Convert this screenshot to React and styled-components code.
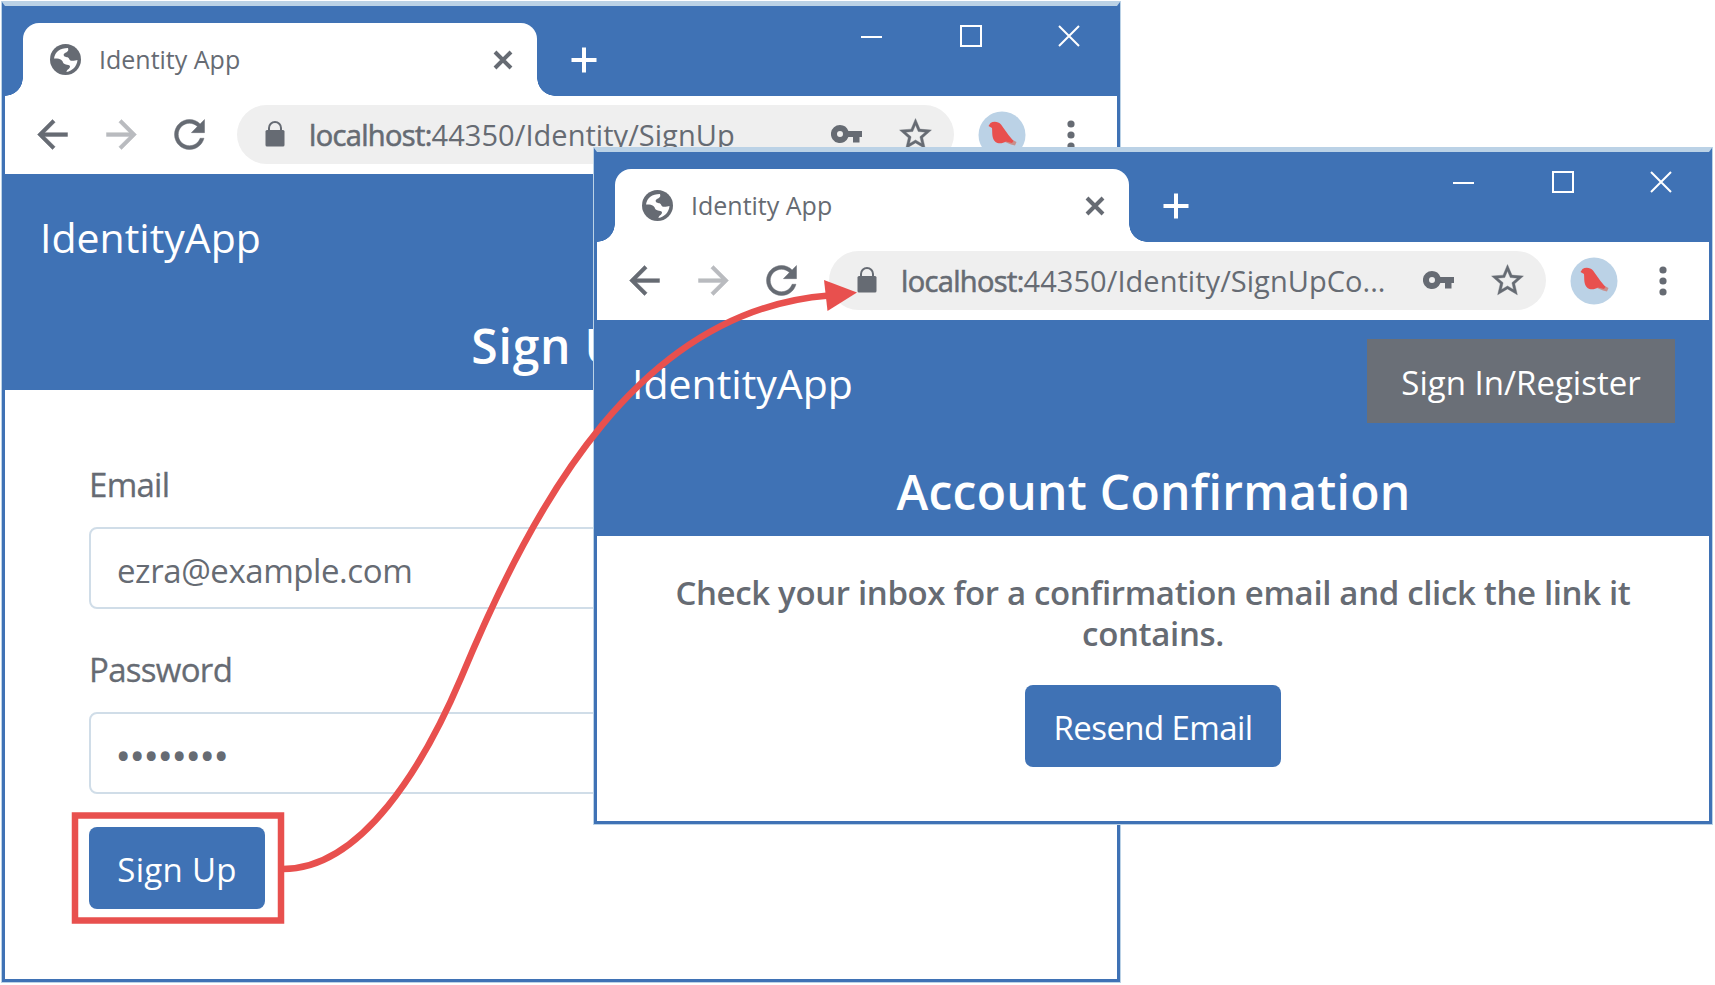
import React from "react";
import styled, { createGlobalStyle } from "styled-components";

const BLUE = "#3f72b5";
const GRAY = "#666b73";
const RED = "#e8504e";
const SKY = "#bbd2e6";

const GlobalStyle = createGlobalStyle`
  * { box-sizing: border-box; }
  body {
    margin: 0;
    background: #fff;
    color: ${GRAY};
    font-family: "Open Sans", "Noto Sans", sans-serif;
  }
`;

const Desktop = styled.main`
  position: relative;
  width: 1715px;
  height: 985px;
  overflow: hidden;
`;

const Window = styled.section`
  position: absolute;
  left: ${(p) => p.$x}px;
  top: ${(p) => p.$y}px;
  width: 1118px;
  height: ${(p) => p.$height}px;
  display: flex;
  flex-direction: column;
  background: #fff;
  border: 3px solid ${BLUE};
  border-top: 4px solid ${SKY};
  box-shadow: 0 0 0 1px ${SKY};
`;

const TitleBar = styled.header`
  display: flex;
  align-items: flex-end;
  height: 90px;
  flex: none;
  background: ${BLUE};
`;

const Tab = styled.div`
  position: relative;
  display: flex;
  align-items: center;
  width: 514px;
  height: 73px;
  margin-left: 18px;
  padding: 0 24px 0 27px;
  background: #fff;
  border-radius: 16px 16px 0 0;
  &::before,
  &::after {
    content: "";
    position: absolute;
    bottom: 0;
    width: 18px;
    height: 18px;
  }
  &::before {
    right: 100%;
    background: radial-gradient(circle at 0 0, ${BLUE} 17.5px, #fff 18px);
  }
  &::after {
    left: 100%;
    background: radial-gradient(circle at 100% 0, ${BLUE} 17.5px, #fff 18px);
  }
`;

const TabTitle = styled.span`
  flex: 1;
  margin-left: 18px;
  padding-bottom: 2px;
  font-size: 25px;
  line-height: 34px;
`;

const NewTab = styled.div`
  display: flex;
  align-items: center;
  height: 73px;
  margin-left: 34px;
`;

const Controls = styled.div`
  display: flex;
  gap: 76.5px;
  margin: 0 37px 49px auto;
`;

const Toolbar = styled.div`
  display: flex;
  align-items: center;
  flex: none;
  height: 78px;
  padding: 0 0 1px 25px;
`;

const NavButtons = styled.div`
  display: flex;
  gap: 23.5px;
  margin-right: 25px;
`;

const AddressBar = styled.div`
  display: flex;
  align-items: center;
  width: 717px;
  height: 59px;
  padding: 0 21px 0 28px;
  background: #efefef;
  border-radius: 30px;
`;

const Url = styled.span`
  flex: 1;
  margin-left: 24px;
  font-size: 29px;
  line-height: 40px;
  letter-spacing: 0.04px;
  white-space: nowrap;
`;

const Host = styled.span`
  letter-spacing: -0.65px;
  -webkit-text-stroke: 0.6px ${GRAY};
`;

const AddressIcons = styled.div`
  display: flex;
  align-items: center;
  gap: 36px;
  padding-bottom: 1px;
`;

const Avatar = styled.svg`
  margin-left: 24px;
`;

const Menu = styled.svg`
  margin-left: 41px;
`;

const Banner = styled.div`
  flex: none;
  height: 216px;
  padding: 19px 34px 0 35px;
  background: ${BLUE};
  color: #fff;
`;

const BannerRow = styled.div`
  display: flex;
  align-items: center;
  justify-content: space-between;
  height: 84px;
`;

const Brand = styled.div`
  padding-top: 4px;
  font-size: 41px;
  line-height: 56px;
`;

const AccountButton = styled.div`
  width: 308px;
  height: 84px;
  background: #6a6f77;
  font-size: 33px;
  line-height: 87px;
  text-align: center;
`;

const Title = styled.h1`
  margin: 36px 0 0;
  font-size: 48px;
  font-weight: 600;
  line-height: 66px;
  letter-spacing: ${(p) => p.$spacing}px;
  text-align: center;
`;

const Form = styled.div`
  display: flex;
  flex-direction: column;
  align-items: flex-start;
  padding: 73px 84px 0;
`;

const Label = styled.div`
  margin-bottom: 20px;
  font-size: 33px;
  line-height: 44px;
  letter-spacing: -0.7px;
  -webkit-text-stroke: 0.3px ${GRAY};
`;

const Field = styled.div`
  width: 100%;
  height: 82px;
  margin-bottom: ${(p) => p.$gap}px;
  padding-left: 26px;
  border: 2px solid #d0dde8;
  border-radius: 8px;
  font-size: 33px;
  line-height: 83px;
  letter-spacing: -0.42px;
`;

const Mask = styled.span`
  letter-spacing: 1.6px;
  -webkit-text-stroke: 2px ${GRAY};
`;

const Button = styled.div`
  width: ${(p) => p.$width}px;
  height: 82px;
  border-radius: 8px;
  background: ${BLUE};
  color: #fff;
  font-size: 33px;
  line-height: 85px;
  letter-spacing: ${(p) => p.$spacing}px;
  text-align: center;
`;

const Notice = styled.div`
  display: flex;
  flex-direction: column;
  align-items: center;
  padding: 36px 60px 0;
`;

const Message = styled.p`
  margin: 0 0 31px;
  font-size: 33px;
  font-weight: 600;
  line-height: 41px;
  letter-spacing: -0.35px;
  text-align: center;
`;

const Annotations = styled.svg`
  position: absolute;
  inset: 0;
`;

const Globe = () => (
  <svg width="31" height="31" viewBox="0 0 31 31">
    <circle cx="15.5" cy="15.5" r="15.5" fill={GRAY} />
    <path
      d="M4 14.500C5 8 10 4 18 4c.500 2 .500 3-1.500 4.200C14 9.500 13 10 14 12c1.500 1.500 4.500.500 5.200 3 .800 3 5.800 1.500 8.300 1C27 22 22.500 27 16.500 28c0-2.500 3.500-3 3.500-5.500 0-2.500-5.500-1-7-4-1-3.500-4-4-9-4z"
      fill="#fff"
    />
  </svg>
);

const Stroke = ({ size, d, width, color = "#fff" }) => (
  <svg width={size} height={size} viewBox={`0 0 ${size} ${size}`} fill="none">
    <path d={d} stroke={color} strokeWidth={width} />
  </svg>
);

const Glyph = ({ size = 45, d, color = GRAY, box = "0 0 24 24" }) => (
  <svg width={size} height={size} viewBox={box}>
    <path d={d} fill={color} stroke={color} strokeWidth="0.25" />
  </svg>
);

const Lock = () => (
  <svg width="20" height="28" viewBox="0 0 20 28">
    <rect x="0.500" y="9" width="19" height="16.500" rx="1.500" fill={GRAY} />
    <path d="M4 10V7a6 6 0 0 1 12 0V10" fill="none" stroke={GRAY} strokeWidth="2" />
  </svg>
);

const Key = () => (
  <svg width="31" height="20" viewBox="0 0 31 20">
    <path
      fillRule="evenodd"
      d="M9 1a9 9 0 0 1 8.400 6H31v6h-2.500v5.500h-6.500V13h-4.600A9 9 0 1 1 9 1zm0 6a3 3 0 1 0 0 6 3 3 0 0 0 0-6z"
      fill={GRAY}
    />
  </svg>
);

function BrowserWindow({ x, y, height, path, title, titleSpacing, action, children }) {
  return (
    <Window $x={x} $y={y} $height={height}>
      <TitleBar>
        <Tab>
          <Globe />
          <TabTitle>Identity App</TabTitle>
          <Stroke size={20} d="M2 2L18 18M18 2L2 18" width={4} color={GRAY} />
        </Tab>
        <NewTab>
          <Stroke size={26} d="M13 0.500V25.500M0.500 13H25.500" width={4} />
        </NewTab>
        <Controls>
          <Stroke size={22} d="M0 12H21" width={2} />
          <Stroke size={22} d="M1 1H21V21H1Z" width={2} />
          <Stroke size={22} d="M1 1L21 21M21 1L1 21" width={2} />
        </Controls>
      </TitleBar>
      <Toolbar>
        <NavButtons>
          <Glyph d="M20 11H7.830l5.590-5.590L12 4l-8 8 8 8 1.410-1.410L7.830 13H20v-2z" />
          <Glyph color="#b9bbbf" d="M12 4l-1.410 1.410L16.170 11H4v2h12.170l-5.580 5.590L12 20l8-8z" />
          <Glyph d="M17.650 6.350C16.200 4.900 14.210 4 12 4c-4.420 0-7.990 3.580-7.990 8s3.570 8 7.990 8c3.730 0 6.840-2.550 7.730-6h-2.080c-.820 2.330-3.040 4-5.650 4-3.310 0-6-2.690-6-6s2.690-6 6-6c1.660 0 3.140.690 4.220 1.780L13 11h7V4l-2.350 2.350z" />
        </NavButtons>
        <AddressBar>
          <Lock />
          <Url>
            <Host>localhost:</Host>
            {path}
          </Url>
          <AddressIcons>
            <Key />
            <Glyph
              size={35}
              box="1 1 22 22"
              d="M22 9.240l-7.190-.620L12 2 9.190 8.630 2 9.240l5.460 4.730L5.820 21 12 17.270 18.180 21l-1.630-7.030L22 9.240zM12 15.400l-3.760 2.270 1-4.280-3.320-2.880 4.380-.380L12 6.100l1.710 4.040 4.380.380-3.320 2.880 1 4.280L12 15.400z"
            />
          </AddressIcons>
        </AddressBar>
        <Avatar width="48" height="48" viewBox="0 0 48 48">
          <circle cx="24" cy="24" r="23.500" fill={SKY} />
          <path d="M29 26l9.500 5-1.500 3.500-4-1-6-2.500z" fill="#c98f8c" />
          <path d="M10.500 15l2-3c3-2 8-1.500 10.500 1.500l7.500 10.500 5 6-1.500 2-6-1.500c-3 2-8 2.500-10.500.5-4-3.500-3-9-3.500-14z" fill={RED} />
        </Avatar>
        <Menu width="8" height="30" viewBox="0 0 8 30">
          <circle cx="4" cy="4" r="3.600" fill={GRAY} />
          <circle cx="4" cy="15" r="3.600" fill={GRAY} />
          <circle cx="4" cy="26" r="3.600" fill={GRAY} />
        </Menu>
      </Toolbar>
      <Banner>
        <BannerRow>
          <Brand>IdentityApp</Brand>
          {action && <AccountButton>{action}</AccountButton>}
        </BannerRow>
        <Title $spacing={titleSpacing}>{title}</Title>
      </Banner>
      {children}
    </Window>
  );
}

export default function App() {
  return (
    <Desktop>
      <GlobalStyle />
      <BrowserWindow x={2} y={2} height={980} path="44350/Identity/SignUp" title="Sign Up" titleSpacing={0.8}>
        <Form>
          <Label>Email</Label>
          <Field $gap={39}>ezra@example.com</Field>
          <Label>Password</Label>
          <Field $gap={33}>
            <Mask>••••••••</Mask>
          </Field>
          <Button $width={176} $spacing={0.3}>Sign Up</Button>
        </Form>
      </BrowserWindow>
      <BrowserWindow
        x={594}
        y={148}
        height={676}
        path="44350/Identity/SignUpCo..."
        title="Account Confirmation"
        titleSpacing={0.28}
        action="Sign In/Register"
      >
        <Notice>
          <Message>Check your inbox for a confirmation email and click the link it contains.</Message>
          <Button $width={256} $spacing={-0.6}>Resend Email</Button>
        </Notice>
      </BrowserWindow>
      <Annotations width="1715" height="985" viewBox="0 0 1715 985" fill="none">
        <rect x="75" y="815.500" width="206" height="105" stroke={RED} strokeWidth="6.500" />
        <path d="M283 869C362 869 424 765 461 678C535 500 640 310 829 295.500" stroke={RED} strokeWidth="6.500" />
        <path d="M824 280L857 292.500L827.500 311Z" fill={RED} />
      </Annotations>
    </Desktop>
  );
}
